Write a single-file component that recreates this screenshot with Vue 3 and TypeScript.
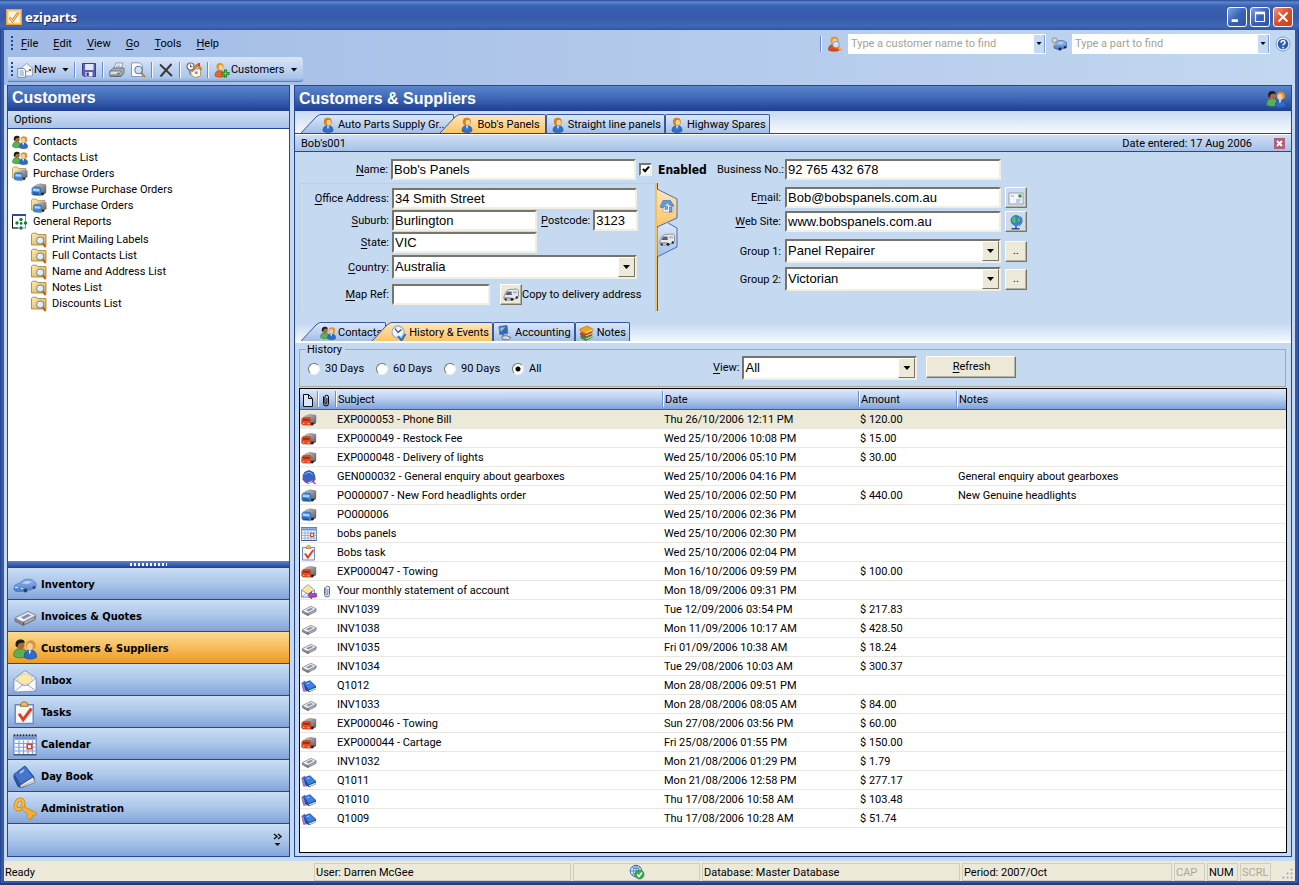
<script setup lang="ts">
import { ref } from 'vue'

interface TreeItem { icon: string; label: string; child?: boolean; tall?: boolean }
interface NavItem { icon: string; label: string }
interface HistoryRow { icon: string; clip?: boolean; subject: string; date: string; amount?: string; notes?: string }

const menus: string[] = ['File', 'Edit', 'View', 'Go', 'Tools', 'Help']

const tree: TreeItem[] = [
  { icon: 'people', label: 'Contacts' },
  { icon: 'people', label: 'Contacts List' },
  { icon: 'folder-truck', label: 'Purchase Orders' },
  { icon: 'truck-blue', label: 'Browse Purchase Orders', child: true },
  { icon: 'folder-truck', label: 'Purchase Orders', child: true },
  { icon: 'report', label: 'General Reports', tall: true },
  { icon: 'folder-find', label: 'Print Mailing Labels', child: true },
  { icon: 'folder-find', label: 'Full Contacts List', child: true },
  { icon: 'folder-find', label: 'Name and Address List', child: true },
  { icon: 'folder-find', label: 'Notes List', child: true },
  { icon: 'folder-find', label: 'Discounts List', child: true },
]

const nav: NavItem[] = [
  { icon: 'car', label: 'Inventory' },
  { icon: 'invoice', label: 'Invoices & Quotes' },
  { icon: 'people', label: 'Customers & Suppliers' },
  { icon: 'mail-open', label: 'Inbox' },
  { icon: 'task', label: 'Tasks' },
  { icon: 'calendar', label: 'Calendar' },
  { icon: 'book', label: 'Day Book' },
  { icon: 'key', label: 'Administration' },
]
const activeNav = ref('Customers & Suppliers')

const rows: HistoryRow[] = [
  { icon: 'truck-red', subject: 'EXP000053 - Phone Bill', date: 'Thu 26/10/2006 12:11 PM', amount: '$ 120.00' },
  { icon: 'truck-red', subject: 'EXP000049 - Restock Fee', date: 'Wed 25/10/2006 10:08 PM', amount: '$ 15.00' },
  { icon: 'truck-red', subject: 'EXP000048 - Delivery of lights', date: 'Wed 25/10/2006 05:10 PM', amount: '$ 30.00' },
  { icon: 'book-arrow', subject: 'GEN000032 - General enquiry about gearboxes', date: 'Wed 25/10/2006 04:16 PM', notes: 'General enquiry about gearboxes' },
  { icon: 'truck-blue', subject: 'PO000007 - New Ford headlights order', date: 'Wed 25/10/2006 02:50 PM', amount: '$ 440.00', notes: 'New Genuine headlights' },
  { icon: 'truck-blue', subject: 'PO000006', date: 'Wed 25/10/2006 02:36 PM' },
  { icon: 'calendar', subject: 'bobs panels', date: 'Wed 25/10/2006 02:30 PM' },
  { icon: 'task', subject: 'Bobs task', date: 'Wed 25/10/2006 02:04 PM' },
  { icon: 'truck-red', subject: 'EXP000047 - Towing', date: 'Mon 16/10/2006 09:59 PM', amount: '$ 100.00' },
  { icon: 'mail-reply', clip: true, subject: 'Your monthly statement of account', date: 'Mon 18/09/2006 09:31 PM' },
  { icon: 'invoice', subject: 'INV1039', date: 'Tue 12/09/2006 03:54 PM', amount: '$ 217.83' },
  { icon: 'invoice', subject: 'INV1038', date: 'Mon 11/09/2006 10:17 AM', amount: '$ 428.50' },
  { icon: 'invoice', subject: 'INV1035', date: 'Fri 01/09/2006 10:38 AM', amount: '$ 18.24' },
  { icon: 'invoice', subject: 'INV1034', date: 'Tue 29/08/2006 10:03 AM', amount: '$ 300.37' },
  { icon: 'books-blue', subject: 'Q1012', date: 'Mon 28/08/2006 09:51 PM' },
  { icon: 'invoice', subject: 'INV1033', date: 'Mon 28/08/2006 08:05 AM', amount: '$ 84.00' },
  { icon: 'truck-red', subject: 'EXP000046 - Towing', date: 'Sun 27/08/2006 03:56 PM', amount: '$ 60.00' },
  { icon: 'truck-red', subject: 'EXP000044 - Cartage', date: 'Fri 25/08/2006 01:55 PM', amount: '$ 150.00' },
  { icon: 'invoice', subject: 'INV1032', date: 'Mon 21/08/2006 01:29 PM', amount: '$ 1.79' },
  { icon: 'books-blue', subject: 'Q1011', date: 'Mon 21/08/2006 12:58 PM', amount: '$ 277.17' },
  { icon: 'books-blue', subject: 'Q1010', date: 'Thu 17/08/2006 10:58 AM', amount: '$ 103.48' },
  { icon: 'books-blue', subject: 'Q1009', date: 'Thu 17/08/2006 10:28 AM', amount: '$ 51.74' },
]
const selectedRow = ref(0)

const periods: string[] = ['30 Days', '60 Days', '90 Days', 'All']
const period = ref('All')

const findCustomer = ref('')
const findPart = ref('')
const customer = ref({
  name: "Bob's Panels",
  street: '34 Smith Street',
  suburb: 'Burlington',
  postcode: '3123',
  state: 'VIC',
  mapRef: '',
  businessNo: '92 765 432 678',
  email: 'Bob@bobspanels.com.au',
  web: 'www.bobspanels.com.au',
  enabled: true,
})
</script>

<template>
  <svg class="defs" aria-hidden="true">
    <defs>
      <linearGradient id="g-folder" x1="0" y1="0" x2="1" y2="1"><stop offset="0" stop-color="#fdeeb4" /><stop offset="1" stop-color="#dba545" /></linearGradient>
      <linearGradient id="g-blue" x1="0" y1="0" x2="0" y2="1"><stop offset="0" stop-color="#9cc0f0" /><stop offset="1" stop-color="#4478cc" /></linearGradient>
      <linearGradient id="g-grey" x1="0" y1="0" x2="1" y2="1"><stop offset="0" stop-color="#c8c8cc" /><stop offset="1" stop-color="#5a5a60" /></linearGradient>
      <linearGradient id="g-tab" x1="0" y1="0" x2="0" y2="1"><stop offset="0" stop-color="#dce8f8" /><stop offset="1" stop-color="#a3bfe6" /></linearGradient>
      <linearGradient id="g-tab-on" x1="0" y1="0" x2="0" y2="1"><stop offset="0" stop-color="#fde6c0" /><stop offset="1" stop-color="#fac566" /></linearGradient>
    </defs>
    <symbol id="i-logo" viewBox="0 0 16 16">
      <rect x=".5" y=".5" width="15" height="15" fill="#f6b050" stroke="#f2a030" />
      <rect x="2" y="2" width="12" height="12" fill="#fdf3da" stroke="#fbdc9c" />
      <path d="M3.500 8.500l3 3.500 6-8.500" fill="none" stroke="#a87830" stroke-width="2.600" /><path d="M3.500 8.500l3 3.500 6-8.500" fill="none" stroke="#fbd890" stroke-width="1.200" />
    </symbol>
    <symbol id="i-person" viewBox="0 0 16 16">
      <path d="M3 14c0-4 2-5.500 5-5.500s5 1.500 5 5.500c-2 2-8 2-10 0z" fill="#2f72cc" stroke="#1d4a94" stroke-width=".6" />
      <path d="M7 9l1 3.500 1.100-3.500z" fill="#e8f0fb" />
      <circle cx="7.800" cy="4.800" r="4" fill="#d08416" /><ellipse cx="8.800" cy="5.600" rx="2.200" ry="2.800" fill="#f8cf9c" />
    </symbol>
    <symbol id="i-people" viewBox="0 0 16 16">
      <path d="M.5 12.500C.5 9 2 7.800 5 7.800s4.500 1.500 4.500 5c-2 1.500-7.500 1.500-9-.3z" fill="#5cb054" stroke="#2e7a3c" stroke-width=".5" />
      <ellipse cx="5" cy="5.200" rx="2.700" ry="3" fill="#a96a35" /><path d="M1.800 6C1.300 3 3 1.600 5 1.700c1.800-.2 3 .8 2.800 2.300C6 3.600 4 4 3.400 5L3 7z" fill="#1d1d1d" />
      <path d="M7.500 13.500c0-3.500 1.300-4.800 4-4.800s4.200 1.500 4.200 4.800c-2 1.600-6.500 1.600-8.200 0z" fill="#2e6cc6" stroke="#1d4a94" stroke-width=".5" />
      <path d="M10.400 9l.7 2.600 1-2.600z" fill="#fff" />
      <circle cx="11.900" cy="5.500" r="3.300" fill="#d8963a" /><ellipse cx="11.200" cy="6.400" rx="2" ry="2.400" fill="#f8cc9a" />
    </symbol>
    <symbol id="i-truck-blue" viewBox="0 0 16 16">
      <path d="M4 3.500l5-1.700 6 1v7L10 12.500 4 11z" fill="url(#g-grey)" stroke="#666" stroke-width=".4" />
      <path d="M1 6.500l1.500-1.800 6.500.6.800 1.200v7l-7.800-.4L.8 12z" fill="#3f86d8" stroke="#1c5aaa" stroke-width=".5" />
      <path d="M2 6.500l6.500.4v2.600L1.800 9z" fill="#a5d4f8" /><path d="M2 10.800l5.500.4M2.200 12.400l6 .3" stroke="#123c84" stroke-width=".8" />
      <path d="M10 12l5-2v1l-5 2.500z" fill="#333" /><circle cx="11.500" cy="12" r="1.400" fill="#222" />
    </symbol>
    <symbol id="i-truck-red" viewBox="0 0 16 16">
      <path d="M4 4l5-1.700 6 1v6.500L10 12.500 4 11z" fill="url(#g-grey)" stroke="#777" stroke-width=".4" />
      <path d="M.8 7l1.500-1.800 6.700.4.800 1.200v6.400l-7.800-.2L.6 12z" fill="#e84a22" stroke="#b43214" stroke-width=".5" />
      <path d="M2 6.800l6.500.3v2l-6.700-.3z" fill="#8c3428" /><path d="M1.800 11.400l1.500.1M6.500 11.700l1.800.1" stroke="#ffd9a0" stroke-width="1" />
      <path d="M10 12l5-2v1l-5 2.500z" fill="#333" /><circle cx="11.300" cy="12" r="1.400" fill="#222" />
    </symbol>
    <symbol id="i-folder-truck" viewBox="0 0 16 16">
      <path d="M.5 12V2.500L1.500 1h4l1 1.500H14V12z" fill="url(#g-folder)" stroke="#a98a48" stroke-width=".7" />
      <path d="M6 5l5-1.500 4.500 1V11l-4 2L6 12z" fill="url(#g-grey)" />
      <path d="M2.500 8l1-1.500 6 .5.800 1v6.500l-7-.5-1-1z" fill="#3f86d8" stroke="#1c5aaa" stroke-width=".5" />
      <path d="M3.500 8l6 .4v2.300l-6-.3z" fill="#a5d4f8" /><circle cx="12" cy="12.800" r="1.300" fill="#222" />
    </symbol>
    <symbol id="i-report" viewBox="0 0 16 16">
      <rect x=".5" y="1" width="13" height="13" fill="#fff" stroke="#8b93a8" /><path d="M0 1h14" stroke="#2a4aa8" stroke-width="2" /><path d="M.5 2v12H6" stroke="#111" fill="none" />
      <g fill="#12803c"><circle cx="9" cy="5.500" r="1.700" /><circle cx="5" cy="9" r="1.700" /><circle cx="9.200" cy="9.400" r="1.400" /><circle cx="13.500" cy="9" r="1.700" /><circle cx="9" cy="14" r="1.700" /></g>
    </symbol>
    <symbol id="i-folder-find" viewBox="0 0 16 16">
      <path d="M.5 13V2.500L1.500 1.200h4l1 1.300H15V13z" fill="url(#g-folder)" stroke="#9c7c3c" stroke-width=".8" />
      <path d="M11.500 11l3.300 4" stroke="#b86a14" stroke-width="2.200" /><circle cx="9.200" cy="8.500" r="3.600" fill="#dcecfc" stroke="#6b84ac" /><path d="M7.200 8.500a2 2 0 012-2" stroke="#fff" fill="none" stroke-width="1.200" />
    </symbol>
    <symbol id="i-car" viewBox="0 0 24 24">
      <path d="M1 15c0-3 2-4 5-4.500L10.500 7c4-1.500 7-1 9 0l3.500 3v4l-4 2.500-9 2H3l-2-1.500z" fill="url(#g-blue)" stroke="#4a74be" stroke-width=".7" />
      <path d="M7.500 11l4-3c2-.8 4-.8 6 0l2 2-5 1.400z" fill="#b8d2f4" stroke="#5a84c8" stroke-width=".6" />
      <circle cx="12.500" cy="17.500" r="1.900" fill="#36405a" /><circle cx="21" cy="14.500" r="1.500" fill="#36405a" /><path d="M2 14.500h3M8 15.500h2" stroke="#f2f7ff" stroke-width="1.200" />
    </symbol>
    <symbol id="i-invoice" viewBox="0 0 24 24">
      <path d="M2 13L15 6.500l8 4-1 4L10 20.500 2 16z" fill="#84868e" stroke="#64666e" stroke-width=".8" />
      <path d="M2 13L15 6.500l8 4L10.500 17z" fill="#e3e5ea" stroke="#8b8d95" stroke-width=".7" />
      <path d="M8 12.500l7-3.500 3 1.500-7 3.500z" fill="#7d8caa" /><path d="M5 13l5 2.500" stroke="#fff" stroke-width="1.500" /><path d="M10.500 17v3" stroke="#50525a" />
      <path d="M12 18l9-4.500" stroke="#d8d9de" stroke-width=".9" />
    </symbol>
    <symbol id="i-mail-open" viewBox="0 0 24 24">
      <path d="M1 10L12 1.500 23 9v13l-22 1z" fill="#e7edfa" stroke="#8494c0" />
      <path d="M4.500 8l7-3.500L19 7.500V15H4.500z" fill="#fce9a8" stroke="#d8c078" stroke-width=".6" />
      <path d="M1 10l9 6.500h4L23 9v13l-22 1z" fill="#f8faff" stroke="#8494c0" stroke-width=".8" /><path d="M1 23l9-7.500M23 22l-9-6.500" stroke="#8494c0" stroke-width=".8" />
    </symbol>
    <symbol id="i-mail-reply" viewBox="0 0 16 16">
      <path d="M.5 7L7 1.500 13.500 7v7H.5z" fill="#fbe59a" stroke="#8494c0" stroke-width=".8" />
      <path d="M.5 7L6 10.500h2L13.500 7v7H.5z" fill="#f4f8ff" stroke="#7488bc" stroke-width=".8" /><path d="M.5 14L6 10" stroke="#7488bc" stroke-width=".7" />
      <path d="M6.500 12l4-3.500v2h5v3.600h-5V16z" fill="#a648b8" stroke="#6a2480" stroke-width=".6" />
    </symbol>
    <symbol id="i-task" viewBox="0 0 16 16">
      <path d="M1.500 2.500h12v12.500h-12z" fill="#f4f7fd" stroke="#6c8ac4" /><path d="M5 3.500c0-1.600 1-3 2.500-3s2.500 1.400 2.500 3z" fill="#e6bf6c" stroke="#9c7428" stroke-width=".7" />
      <path d="M4 8.500L6.800 12.500 12.300 5" fill="none" stroke="#e2401c" stroke-width="2" />
    </symbol>
    <symbol id="i-calendar" viewBox="0 0 16 16">
      <rect x=".5" y="2" width="15" height="12.500" fill="#f6f9ff" stroke="#7a94c8" /><rect x="1" y="2.500" width="14" height="2" fill="#6d95dc" />
      <path d="M.5 1.500h15" stroke="#333" stroke-width="1.200" stroke-dasharray="1 1" />
      <path d="M1 7h14M1 9.500h14M1 12h14M4 5v9M7 5v9M10 5v9M13 5v9" stroke="#7fa3e4" stroke-width=".8" />
      <rect x="9.500" y="7.500" width="3" height="3" fill="#fff" stroke="#e0401c" /><path d="M.5 14.500h15" stroke="#4a5c84" />
    </symbol>
    <symbol id="i-book" viewBox="0 0 24 24">
      <path d="M1 9.500L12 1l9 11v5L9 22.500l-4-1L1 13z" fill="#2c55a4" stroke="#1a3a7c" stroke-width=".8" />
      <path d="M7 20.500L20 12l2 5.500-13.500 5z" fill="#e9ebf0" stroke="#6c7488" stroke-width=".7" /><path d="M1 9.500L12 1l8 11L7.500 19z" fill="#4477cc" stroke="#27509c" stroke-width=".7" />
      <path d="M7 8l4-3" stroke="#a5c8f6" stroke-width="1.600" /><path d="M9 21l12-5" stroke="#9aa0b0" stroke-width=".7" />
    </symbol>
    <symbol id="i-books-blue" viewBox="0 0 16 16">
      <path d="M.8 5l3-2L6 13l-3.500.3z" fill="#a486cc" stroke="#68489c" stroke-width=".6" />
      <path d="M2.500 5l6.500-2.300L15 8.500v2.500L8 14.300 4.200 11.500z" fill="#1c4ca4" /><path d="M2.500 5L9 2.700 15 8.500l-7.300 3.300z" fill="#3d80de" stroke="#1c4ca4" stroke-width=".6" />
      <path d="M8 13l6.700-2.800" stroke="#eef3fb" stroke-width="1.200" /><path d="M6 5.800l2.500-1" stroke="#a8cff8" />
    </symbol>
    <symbol id="i-book-arrow" viewBox="0 0 16 16">
      <path d="M2 6.500l2-3.500 4-1.500 4.500 2L14 8l-1 4-6 2.500L2.500 11z" fill="#3468c4" stroke="#1c3f8c" stroke-width=".7" /><path d="M4 6l2-2.500h3l2.500 2" stroke="#8cbcf4" fill="none" />
      <path d="M7 14l6-2.500" stroke="#e0e4f0" stroke-width="1.200" /><path d="M14.500 9.500l-3 3 3 2.500" fill="none" stroke="#9c3cac" stroke-width="1.500" /><path d="M1.500 9.500l4 4.500" stroke="#9c3cac" stroke-width="1.200" />
    </symbol>
    <symbol id="i-key" viewBox="0 0 24 24">
      <ellipse cx="6.500" cy="7.500" rx="3.600" ry="5.200" transform="rotate(25 6.500 7.500)" fill="none" stroke="#c88418" stroke-width="4" />
      <ellipse cx="6.500" cy="7.500" rx="3.600" ry="5.200" transform="rotate(25 6.500 7.500)" fill="none" stroke="#f8bc44" stroke-width="2.400" />
      <path d="M8 11l3-1.500L23.500 16l-.5 2-2 1-1.500-.5.300 2-2.300.3.500 2.200-4-2 1-3z" fill="#f4ae34" stroke="#c8841e" stroke-width=".8" />
    </symbol>
    <symbol id="i-van" viewBox="0 0 16 16">
      <path d="M1 9l2.500-5L6 2.500l8-.5 1.500 1.500v6L13 11.500 8 13H2l-1-1z" fill="#e8e9ee" stroke="#70727a" stroke-width=".7" />
      <path d="M2.500 8L4 4.800l4.500-.3L8.800 8z" fill="#5a5e72" /><path d="M10 4.300h4v2h-4z" fill="#b4b6c4" /><path d="M1 11h7" stroke="#666" />
      <circle cx="9" cy="12.300" r="1.500" fill="#222" /><circle cx="2.800" cy="12.600" r="1.100" fill="#222" /><circle cx="13.800" cy="10.500" r="1.200" fill="#222" />
    </symbol>
    <symbol id="i-house" viewBox="0 0 16 16">
      <path d="M4 7h10v7H4z" fill="#f4f6fc" stroke="#8a96b8" stroke-width=".6" /><path d="M1 9l3-6.500h7.500L15 8H12L8 4.500 4 10z" fill="#5a9ce0" stroke="#3a70b8" stroke-width=".6" />
      <rect x="6" y="8.500" width="2.500" height="3" fill="#8cb4e4" stroke="#3a68a8" stroke-width=".6" /><rect x="10.500" y="9" width="2.300" height="5" fill="#78a4dc" stroke="#3a68a8" stroke-width=".6" />
    </symbol>
    <symbol id="i-card" viewBox="0 0 16 16">
      <rect x="1" y="3" width="14" height="11" fill="#f4f6fb" stroke="#8890a8" stroke-width=".8" /><rect x="10.500" y="4.500" width="3" height="3" fill="#18963c" /><path d="M3 6h3M8 10h5M8 12h4" stroke="#99a" />
    </symbol>
    <symbol id="i-globe" viewBox="0 0 16 16">
      <circle cx="8" cy="6.500" r="5" fill="#2f86dc" stroke="#1c4c94" stroke-width=".6" /><path d="M5 3c2-1.500 3 0 2.500 1.500S9 7 7 8.500 4 7 4 5zM10 3.500c1.500 0 2.500 2 2 3.500S10 8 9.800 6z" fill="#58c048" />
      <path d="M12.500 2.500a6 6 0 01-2 9.500" fill="none" stroke="#2c5c9c" /><path d="M8 12v2M3.500 14.700h8" stroke="#285090" stroke-width="1.500" />
    </symbol>
    <symbol id="i-clock" viewBox="0 0 16 16">
      <circle cx="7" cy="7" r="6" fill="#eef5fd" stroke="#9cb4d4" stroke-width="1.300" /><path d="M4 3.500l3 4 3.500-3" fill="none" stroke="#2a3f70" stroke-width="1.200" />
      <path d="M7 11l3.500 4.500L14.500 9" fill="none" stroke="#2a6cc8" stroke-width="2" />
    </symbol>
    <symbol id="i-computer" viewBox="0 0 16 16">
      <path d="M2 1.500l8-1 .8 8-8 1z" fill="#2c66b8" stroke="#6b7890" /><path d="M3 2.800l5.500-.7-4.500 5z" fill="#8cc0f4" />
      <path d="M5 11.500l4-1 5 2-3 2.500-6-1z" fill="#d4d8e0" stroke="#5c6478" stroke-width=".8" /><path d="M6 9v2" stroke="#555" />
    </symbol>
    <symbol id="i-books" viewBox="0 0 16 16">
      <path d="M2 11l8-2 4 2.500-7 4L2 13z" fill="#3c9c3c" stroke="#1c5c1c" stroke-width=".6" /><path d="M1.500 8l8-2 4.500 2.500-7 3.500-5.500-2z" fill="#d44a20" stroke="#7c2808" stroke-width=".6" />
      <path d="M1 4l7-3 6 3v2L7 9 1 6z" fill="#f4a41c" stroke="#a86808" stroke-width=".6" /><path d="M7 7.500l7-3M7 11l7-3M7 14l7-3" stroke="#dff0d8" stroke-width=".8" />
    </symbol>
    <symbol id="i-new" viewBox="0 0 16 16">
      <path d="M4 6l5.500-4.500L15.500 6v8H4z" fill="#f2f6fe" stroke="#7f93bc" stroke-width=".8" /><path d="M4 6l6 4 5.500-4" fill="none" stroke="#7f93bc" stroke-width=".8" /><rect x="12" y="7" width="2" height="2" fill="#e03c1c" />
      <path d="M.8 6.500h6l1.700 2v6.800H.8z" fill="#fff" stroke="#56719f" stroke-width=".8" /><path d="M2.500 9h4M2.500 11h4.500M2.500 13h4.500" stroke="#5c84d0" stroke-width=".9" />
    </symbol>
    <symbol id="i-save" viewBox="0 0 16 16">
      <path d="M1.500 1.500h13v13H3L1.500 13z" fill="#5a60b8" stroke="#3a408c" /><rect x="4" y="2" width="8.500" height="6" fill="#dfe6f8" /><rect x="4.500" y="10" width="7" height="4.500" fill="#eef0f8" /><rect x="5.500" y="10.500" width="2.300" height="3.500" fill="#3a408c" />
    </symbol>
    <symbol id="i-print" viewBox="0 0 16 16">
      <path d="M5 6l2-5h7l-2 5z" fill="#fff" stroke="#6c7890" stroke-width=".7" /><path d="M7.500 3h4M7 4.500h4" stroke="#7c98cc" stroke-width=".7" />
      <path d="M1 9l3.500-3h10.500v5l-3 3.500H1z" fill="#a9acb4" stroke="#545a66" stroke-width=".7" /><path d="M1 9h11v5H1z" fill="#dcdee4" stroke="#545a66" stroke-width=".7" /><path d="M8 11.500h3" stroke="#2aa43c" stroke-width="1.600" /><path d="M2 13h9" stroke="#666c78" />
    </symbol>
    <symbol id="i-preview" viewBox="0 0 16 16">
      <path d="M1.500.8h8L12.500 4v10.500h-11z" fill="#fdfdff" stroke="#8090b0" stroke-width=".9" /><path d="M11 11l4 4" stroke="#c48418" stroke-width="2.200" /><circle cx="8.500" cy="8" r="3.800" fill="#c9e2fa" stroke="#64748c" />
    </symbol>
    <symbol id="i-delete" viewBox="0 0 16 16"><path d="M2 2.500l12 11.500M13.500 2L2.500 14.500" fill="none" stroke="#383838" stroke-width="1.900" /></symbol>
    <symbol id="i-home-clock" viewBox="0 0 16 16">
      <path d="M5 7h9.500v7L9 15.500 5 13z" fill="#fdf7e4" stroke="#a08048" stroke-width=".7" /><path d="M4 8.500L9 3.500l3-1.500L16 7l-1.500.5L11 4 7 9.500z" fill="#f08c24" stroke="#a84c0c" stroke-width=".6" /><path d="M13 1v3" stroke="#d03010" stroke-width="1.700" />
      <rect x="9" y="9.500" width="2.500" height="2.500" fill="#6c94d0" /><circle cx="4.500" cy="4.500" r="3.500" fill="#f8fafc" stroke="#6c7484" stroke-width="1.200" /><path d="M4.500 2.500v2.200h2" stroke="#333" fill="none" stroke-width=".9" /><path d="M3 8.500l1.500 4.500" stroke="#6c7484" />
    </symbol>
    <symbol id="i-person-add" viewBox="0 0 16 16">
      <path d="M1 14c0-4 2-5.500 4.500-5.500S11 10 11 14c-2 1.600-8 1.600-10 0z" fill="#e4682c" stroke="#9c3c10" stroke-width=".6" /><circle cx="6" cy="4.500" r="3.600" fill="#e09420" /><ellipse cx="6.800" cy="5.400" rx="2.100" ry="2.700" fill="#fad49c" />
      <path d="M11.500 7.500v8M7.500 11.500h8" stroke="#1c7c24" stroke-width="3.200" /><path d="M11.500 8.500v6M8.500 11.500h6" stroke="#5ccc4c" stroke-width="1.400" />
    </symbol>
    <symbol id="i-person-find" viewBox="0 0 16 16">
      <path d="M1.500 14c0-4 2-5.500 5-5.500s6 1.500 6 5.500c-2 1.600-9 1.600-11 0z" fill="#e04c1c" stroke="#9c2c0c" stroke-width=".6" /><circle cx="7.500" cy="4.500" r="4" fill="#e89824" /><ellipse cx="7.800" cy="5.500" rx="2.300" ry="2.700" fill="#fad49c" />
      <path d="M11 11.500l3.800 3" stroke="#f0a844" stroke-width="2.200" /><circle cx="9" cy="8.500" r="3.300" fill="#cfe6fb" stroke="#7a9cc4" />
    </symbol>
    <symbol id="i-car-gear" viewBox="0 0 16 16">
      <path d="M3 9l4-4c3-1 6-.7 9 2v4L8.500 14 3 12z" fill="url(#g-blue)" stroke="#2c5ca4" stroke-width=".7" /><path d="M6 8.500l2-2.400c2-.4 4-.3 5 .6l-1.500 1.800z" fill="#a8c8f0" /><circle cx="9" cy="13" r="1.400" fill="#223" /><circle cx="14" cy="11.300" r="1.200" fill="#223" />
      <circle cx="3.500" cy="4.300" r="2.200" fill="#eef2f8" stroke="#a4a8b0" stroke-width="1.800" /><path d="M4.500 7L3 10" stroke="#a4a8b0" stroke-width="1.600" />
    </symbol>
    <symbol id="i-help" viewBox="0 0 16 16">
      <circle cx="8" cy="8" r="7" fill="#eef4fd" stroke="#7c9cd4" /><circle cx="8" cy="8" r="5.300" fill="#2c5ab8" /><path d="M6 6.700c0-3 4.200-2.600 4 0C9.900 8 8 8 8 9.600" fill="none" stroke="#fff" stroke-width="1.500" /><circle cx="8" cy="11.600" r=".9" fill="#fff" />
    </symbol>
    <symbol id="i-clip" viewBox="0 0 16 16"><path d="M5.500 4.500v7a2.500 2.500 0 005 0V5a1.800 1.800 0 00-3.600 0v6a1 1 0 002 0V6" fill="none" stroke="currentColor" /></symbol>
    <symbol id="i-doc" viewBox="0 0 16 16"><path d="M3.500 2.500h5l4 4v8h-9zM8.500 2.500v4h4" fill="#dbe7f8" stroke="#111" /></symbol>
    <symbol id="i-globe-ok" viewBox="0 0 16 16">
      <circle cx="7" cy="7" r="5.800" fill="#dcecfc" stroke="#3c78c0" /><path d="M1 7h12M7 1v12M3 3.500c2 1.300 6 1.300 8 0M3 10.500c2-1.300 6-1.300 8 0M7 1C3.500 4 3.500 10 7 13M7 1c3.500 3 3.500 9 0 12" fill="none" stroke="#3c78c0" stroke-width=".8" />
      <circle cx="10.500" cy="10.500" r="4.500" fill="#3cac4c" stroke="#267c34" stroke-width=".7" /><path d="M8.300 10.500l1.700 2 3-4" fill="none" stroke="#fff" stroke-width="1.500" />
    </symbol>
  </svg>

  <div class="window">
    <header class="titlebar">
      <svg class="ic"><use href="#i-logo" /></svg>
      <h1>eziparts</h1>
      <button class="win" aria-label="Minimize"><svg viewBox="0 0 20 20"><path d="M4 14h7" stroke="#fff" stroke-width="3" /></svg></button>
      <button class="win" aria-label="Maximize"><svg viewBox="0 0 20 20"><path d="M5 6v9h10V6z" fill="none" stroke="#fff" stroke-width="1.300" /><path d="M4.400 5.500h11.200" stroke="#fff" stroke-width="3" /></svg></button>
      <button class="win close" aria-label="Close"><svg viewBox="0 0 20 20"><path d="M5 5l10 10M15 5L5 15" stroke="#fff" stroke-width="2.200" /></svg></button>
    </header>

    <div class="client">
      <nav class="menubar">
        <i class="grip"></i>
        <button v-for="m in menus" :key="m" class="menu"><u>{{ m[0] }}</u>{{ m.slice(1) }}</button>
        <div class="finders">
          <i class="sep"></i>
          <svg class="ic"><use href="#i-person-find" /></svg>
          <div class="finder">
            <input v-model="findCustomer" aria-label="Find customer" placeholder="Type a customer name to find" />
            <button aria-label="Recent customers"><i class="caret"></i></button>
          </div>
          <svg class="ic"><use href="#i-car-gear" /></svg>
          <div class="finder">
            <input v-model="findPart" aria-label="Find part" placeholder="Type a part to find" />
            <button aria-label="Recent parts"><i class="caret"></i></button>
          </div>
          <button class="tool" aria-label="Help"><svg class="ic"><use href="#i-help" /></svg></button>
        </div>
      </nav>

      <div class="toolbar">
        <i class="grip"></i>
        <button class="tool"><svg class="ic"><use href="#i-new" /></svg>New<i class="caret"></i></button>
        <i class="sep"></i>
        <button class="tool" aria-label="Save"><svg class="ic"><use href="#i-save" /></svg></button>
        <i class="sep"></i>
        <button class="tool" aria-label="Print"><svg class="ic"><use href="#i-print" /></svg></button>
        <button class="tool" aria-label="Print preview"><svg class="ic"><use href="#i-preview" /></svg></button>
        <i class="sep"></i>
        <button class="tool" aria-label="Delete"><svg class="ic"><use href="#i-delete" /></svg></button>
        <i class="sep"></i>
        <button class="tool" aria-label="Reminders"><svg class="ic"><use href="#i-home-clock" /></svg></button>
        <i class="sep"></i>
        <button class="tool"><svg class="ic"><use href="#i-person-add" /></svg>Customers<i class="caret"></i></button>
      </div>

      <div class="body">
        <aside class="side panel">
          <h2>Customers</h2>
          <h3>Options</h3>
          <ul class="tree">
            <li v-for="(t, i) in tree" :key="i" :class="{ child: t.child, tall: t.tall }">
              <svg class="ic"><use :href="'#i-' + t.icon" /></svg><a href="#">{{ t.label }}</a>
            </li>
          </ul>
          <div class="splitter"><i></i></div>
          <button v-for="n in nav" :key="n.label" class="nav" :class="{ on: n.label === activeNav }" @click="activeNav = n.label">
            <svg><use :href="'#i-' + n.icon" /></svg>{{ n.label }}
          </button>
          <div class="navfoot">
            <button aria-label="Configure buttons"><svg viewBox="0 0 10 14"><path d="M1 1l3 2.500L1 6M5 1l3 2.500L5 6" fill="none" stroke="#111" stroke-width="1.400" /><path d="M1.500 10h6L4.500 13z" fill="#111" /></svg></button>
          </div>
        </aside>

        <main class="main panel">
          <h2>Customers &amp; Suppliers<svg class="corner"><use href="#i-people" /></svg></h2>
          <div class="tabs upper">
            <button class="tab slanted first">
              <svg class="slant" viewBox="0 0 20 19"><path class="fill" d="M0 19L15 3Q18 0 20 0V19z" /><path class="line" d="M0 19L15 3Q18 .5 20 .5" /></svg>
              <span class="face"><svg class="ic"><use href="#i-person" /></svg>Auto Parts Supply Gr..</span>
            </button>
            <button class="tab slanted on">
              <svg class="slant" viewBox="0 0 20 19"><path class="fill" d="M0 19L15 3Q18 0 20 0V19z" /><path class="line" d="M0 19L15 3Q18 .5 20 .5" /></svg>
              <span class="face"><svg class="ic"><use href="#i-person" /></svg>Bob's Panels</span>
            </button>
            <button class="tab"><span class="face"><svg class="ic"><use href="#i-person" /></svg>Straight line panels</span></button>
            <button class="tab"><span class="face"><svg class="ic"><use href="#i-person" /></svg>Highway Spares</span></button>
          </div>
          <div class="record">
            <span>Bob's001</span>
            <span class="entered">Date entered: 17 Aug 2006</span>
            <button aria-label="Close record"><svg viewBox="0 0 11 11"><path d="M3 3l5 5M8 3L3 8" stroke="#fff" stroke-width="1.800" /></svg></button>
          </div>

          <form class="form" @submit.prevent>
            <div class="left">
              <div class="line">
                <label for="name"><u>N</u>ame:</label>
                <input id="name" v-model="customer.name" class="field" />
                <input id="enabled" v-model="customer.enabled" type="checkbox" />
                <label for="enabled" class="strong">Enabled</label>
              </div>
              <div class="address">
                <div class="box">
                  <div class="line"><label for="street"><u>O</u>ffice Address:</label><input id="street" v-model="customer.street" class="field" /></div>
                  <div class="line">
                    <label for="suburb"><u>S</u>uburb:</label><input id="suburb" v-model="customer.suburb" class="field mid" />
                    <label for="postcode" class="post"><u>P</u>ostcode:</label><input id="postcode" v-model="customer.postcode" class="field" />
                  </div>
                  <div class="line"><label for="state"><u>S</u>tate:</label><input id="state" v-model="customer.state" class="field mid" /></div>
                  <div class="line"><label for="country"><u>C</u>ountry:</label><span class="combo"><select id="country"><option>Australia</option></select><i class="drop"><i class="caret"></i></i></span></div>
                  <div class="line mapline">
                    <label for="mapref"><u>M</u>ap Ref:</label><input id="mapref" v-model="customer.mapRef" class="field map" />
                    <button id="copy" class="square" aria-labelledby="copytext"><svg class="ic"><use href="#i-van" /></svg></button><label id="copytext" for="copy" class="copy">Copy to delivery address</label>
                  </div>
                </div>
                <div class="sidetabs">
                  <button aria-label="Office address"><svg viewBox="0 0 22 38"><path d="M0 0L20 10V29L0 38z" fill="url(#g-tab-on)" /><path d="M0 0L20 10V29L0 38" fill="none" stroke="#4a6cb0" /></svg><svg class="ic"><use href="#i-house" /></svg></button>
                  <button aria-label="Delivery address"><svg viewBox="0 0 22 38"><path d="M0 5L11 0 20 5V24L0 34z" fill="url(#g-tab)" /><path d="M11 0L20 5V24L0 34V5" fill="none" stroke="#4a6cb0" /></svg><svg class="ic"><use href="#i-van" /></svg></button>
                </div>
              </div>
            </div>
            <div class="right">
              <label for="bno">Business No.:</label><input id="bno" v-model="customer.businessNo" class="field" /><i></i>
              <label for="email">E<u>m</u>ail:</label><input id="email" v-model="customer.email" class="field" /><button class="square cool" aria-label="Send email"><svg class="ic"><use href="#i-card" /></svg></button>
              <label for="web"><u>W</u>eb Site:</label><input id="web" v-model="customer.web" class="field" /><button class="square cool" aria-label="Open web site"><svg class="ic"><use href="#i-globe" /></svg></button>
              <label for="g1">Group 1:</label><span class="combo"><select id="g1"><option>Panel Repairer</option></select><i class="drop"><i class="caret"></i></i></span><button class="square">..</button>
              <label for="g2">Group 2:</label><span class="combo"><select id="g2"><option>Victorian</option></select><i class="drop"><i class="caret"></i></i></span><button class="square">..</button>
            </div>
          </form>

          <div class="tabs lower">
            <button class="tab slanted first">
              <svg class="slant" viewBox="0 0 20 19"><path class="fill" d="M0 19L15 3Q18 0 20 0V19z" /><path class="line" d="M0 19L15 3Q18 .5 20 .5" /></svg>
              <span class="face"><svg class="ic"><use href="#i-people" /></svg>Contacts</span>
            </button>
            <button class="tab slanted on">
              <svg class="slant" viewBox="0 0 20 19"><path class="fill" d="M0 19L15 3Q18 0 20 0V19z" /><path class="line" d="M0 19L15 3Q18 .5 20 .5" /></svg>
              <span class="face"><svg class="ic"><use href="#i-clock" /></svg>History &amp; Events</span>
            </button>
            <button class="tab"><span class="face"><svg class="ic"><use href="#i-computer" /></svg>Accounting</span></button>
            <button class="tab"><span class="face"><svg class="ic"><use href="#i-books" /></svg>Notes</span></button>
          </div>

          <fieldset class="history">
            <legend>History</legend>
            <div class="filters">
              <label v-for="p in periods" :key="p" class="radio"><input v-model="period" type="radio" name="period" :value="p" />{{ p }}</label>
              <label for="view" class="viewlabel"><u>V</u>iew:</label>
              <span class="combo view"><select id="view"><option>All</option></select><i class="drop"><i class="caret"></i></i></span>
              <button class="refresh"><u>R</u>efresh</button>
            </div>
          </fieldset>

          <div class="gridbox">
            <table>
              <colgroup><col class="c1" /><col class="c2" /><col class="c3" /><col class="c4" /><col class="c5" /><col /></colgroup>
              <thead>
                <tr>
                  <th><svg class="ic"><use href="#i-doc" /></svg></th><th><svg class="ic"><use href="#i-clip" /></svg></th>
                  <th>Subject</th><th>Date</th><th>Amount</th><th>Notes</th>
                </tr>
              </thead>
              <tbody>
                <tr v-for="(r, i) in rows" :key="i" :class="{ on: i === selectedRow }" @click="selectedRow = i">
                  <td><svg class="ic"><use :href="'#i-' + r.icon" /></svg></td>
                  <td><svg v-if="r.clip" class="ic clip"><use href="#i-clip" /></svg></td>
                  <td>{{ r.subject }}</td><td>{{ r.date }}</td><td>{{ r.amount }}</td><td>{{ r.notes }}</td>
                </tr>
              </tbody>
            </table>
          </div>
        </main>
      </div>
    </div>

    <footer class="status">
      <span class="s-ready">Ready</span>
      <span class="s-user">User: Darren McGee</span>
      <span class="s-net"><svg class="ic"><use href="#i-globe-ok" /></svg></span>
      <span class="s-db">Database: Master Database</span>
      <span class="s-period">Period: 2007/Oct</span>
      <span class="s-key off">CAP</span>
      <span class="s-key">NUM</span>
      <span class="s-key off">SCRL</span>
      <svg class="size" viewBox="0 0 12 12"><path d="M8 1h3v3H8zM8 5h3v3H8zM4 5h3v3H4zM8 9h3v3H8zM4 9h3v3H4zM0 9h3v3H0z" fill="#b8b4a0" stroke="#fff" stroke-width=".6" /></svg>
    </footer>
  </div>
</template>

<style>
body { margin: 0; }
</style>

<style scoped>
.defs { position: absolute; width: 0; height: 0; }
.window {
  --navy: #27449b;
  --pale: #c5d9f1;
  --beige: #ece9d8;
  box-sizing: border-box;
  min-height: 100vh;
  display: flex;
  flex-direction: column;
  padding: 0 4px 4px;
  background: #3458ac;
  box-shadow: inset 0 -2px #26397c, inset 1px 0 #26458f, inset -1px 0 #26458f;
  color: #000;
  font: 11px/16px Roboto, "Noto Sans", sans-serif;
}
.window *, .window *::before { box-sizing: border-box; }
button, input, select { font: inherit; color: inherit; margin: 0; padding: 0; border: 0; border-radius: 0; background: none; outline: none; }
h1, h2, h3, ul { margin: 0; padding: 0; }
a { color: inherit; text-decoration: none; }
u { text-underline-offset: 2px; }
.ic { width: 16px; height: 16px; flex: none; display: block; }
.caret { display: block; flex: none; width: 7px; height: 4px; background: #000; clip-path: polygon(0 0, 100% 0, 50% 100%); }

.titlebar {
  display: flex; align-items: center; gap: 3px; height: 30px; margin: 0 -4px; padding: 3px 6px 0 6px;
  background: linear-gradient(#28468f 0, #5a86d0 2px, #3a60b2 6px, #365bac 18px, #4068b6 26px, #2f55a6 30px);
  color: #fff;
}
h1 { flex: 1; font: bold 13px/20px "Noto Sans", sans-serif; text-shadow: 1px 1px #1a2f6c; }
.win { width: 20px; height: 20px; border: 1px solid #fff; border-radius: 3px; background: linear-gradient(135deg, #7fa3e2, #3a62b6 50%, #2f55a8); }
.win svg { display: block; width: 18px; height: 18px; }
.win.close { background: linear-gradient(135deg, #f0957c, #e0502c 45%, #cc3c1c); }

.client { flex: 1; display: flex; flex-direction: column; padding: 0 3px; background: linear-gradient(90deg, #a1bbe7 0, #b4caeb 55%, #c2d7f0 100%); }
.menubar { display: flex; align-items: center; height: 27px; padding-left: 4px; }
.grip { width: 2px; height: 15px; margin-right: 5px; background: repeating-linear-gradient(#27449b 0 2px, transparent 2px 4px); flex: none; }
.menu { padding: 0 8px 0 7px; }
.menu:first-of-type { padding-left: 3px; }
.finders { display: flex; align-items: center; gap: 5px; margin-left: auto; padding-right: 1px; }
.sep { width: 2px; height: 16px; flex: none; border-left: 1px solid #6b8cca; border-right: 1px solid #f2f7fe; }
.finder { display: flex; width: 198px; height: 20px; padding: 1px; background: #fff; }
.finder input { flex: 1; min-width: 0; padding-left: 2px; background: transparent; }
.finder input::placeholder { color: #a5a293; opacity: 1; }
.finder button { width: 11px; display: flex; align-items: center; justify-content: center; background: #c5dbf4; border-right: 1px solid #7d9fd6; }
.finder .caret { width: 5px; height: 3px; }

.toolbar { display: flex; align-items: center; align-self: flex-start; height: 25px; gap: 5px; padding: 0 5px 0 3px; margin-left: 1px; border-radius: 0 3px 3px 0; background: linear-gradient(#d9e6f8, #a9c4ea 85%, #7f9fd6); box-shadow: inset 0 -1px #5c7fc2; }
.toolbar .grip { margin-right: -1px; }
.tool { display: flex; align-items: center; gap: 1px; }
.tool .caret { margin-left: 5px; }

.body { flex: 1; display: flex; gap: 4px; margin: 3px -3px 0; padding: 0 3px 4px; background: var(--pale); }
.panel { border: 1px solid var(--navy); display: flex; flex-direction: column; }
.side { flex: none; width: 283px; background: #fff; }
.main { flex: 1; min-width: 0; background: var(--pale); padding: 0 0 3px; }
.main > h2 { display: flex; align-items: center; }
h2 { height: 25px; padding-left: 4px; color: #fff; background: linear-gradient(#5a86cc, #3f66b6 50%, #1c3f94); font: bold 16px/24px "Liberation Sans", Arial, sans-serif; }
.corner { width: 22px; height: 20px; margin: 0 4px 0 auto; }
h3 { height: 18px; padding-left: 6px; font-size: 11px; font-weight: normal; line-height: 18px; background: linear-gradient(#d0e0f5, #a9c3e8); border-bottom: 1px solid var(--navy); }
.tree { flex: 1; list-style: none; padding: 5px 0 0 4px; }
.tree li { display: flex; align-items: center; gap: 5px; height: 16px; }
.tree .tall { height: 18px; padding-bottom: 2px; }
.tree .child { padding-left: 19px; }
.splitter { display: flex; justify-content: center; height: 7px; padding-top: 2px; background: linear-gradient(#5a86cc, #1c3f94); }
.splitter i { width: 37px; height: 3px; background: repeating-linear-gradient(90deg, #fff 0 2px, transparent 2px 4px); }
.nav { display: flex; align-items: center; gap: 4px; height: 32px; padding: 2px 5px 0; border-bottom: 1px solid var(--navy); background: linear-gradient(#cbdef5, #aac6ea 50%, #84a5d9); font: bold 11px/16px "DejaVu Sans Condensed", "Noto Sans", sans-serif; text-align: left; }
.nav svg { width: 24px; height: 24px; flex: none; }
.nav.on { background: linear-gradient(#fadb90, #f6bd5c 50%, #ed9a20); }
.navfoot { display: flex; justify-content: flex-end; height: 32px; padding: 8px 6px; background: linear-gradient(#cbdef5, #aac6ea 50%, #84a5d9); }
.navfoot svg { display: block; width: 10px; height: 14px; }

.tabs { display: flex; align-items: flex-end; flex: none; padding-left: 6px; }
.upper { height: 23px; background: linear-gradient(#c8daf2, #f6f9fe); border-bottom: 1px solid var(--navy); }
.lower { height: 32px; background: linear-gradient(#c5d9f1 40%, #f2f7fd); border-bottom: 2px solid #fff; }
.tab { display: flex; height: 19px; position: relative; }
.face { display: flex; align-items: center; gap: 2px; height: 19px; padding: 1px 3px 0; background: linear-gradient(#dce8f8, #a3bfe6); border: 1px solid #36589f; border-bottom: 0; border-radius: 2px 2px 0 0; }
.slanted .face { border-left: 0; border-radius: 0 2px 0 0; padding-left: 0; padding-right: 5px; }
.slant { width: 20px; height: 19px; margin-right: -1px; flex: none; }
.slant .fill { fill: url(#g-tab); }
.slant .line { fill: none; stroke: #36589f; }
.tab.on { z-index: 1; margin-left: -14px; }
.on .fill { fill: url(#g-tab-on); }
.on .face { background: linear-gradient(#fde6c0, #fac566); }
.first .face { padding-right: 9px; }
.lower .face { padding-right: 3px; }

.record { display: flex; align-items: center; height: 18px; flex: none; padding: 1px 6px 0; border-top: 1px solid #fff; border-bottom: 1px solid var(--navy); background: linear-gradient(#cfdff4, #a6c1e8); }
.entered { margin-left: auto; margin-right: 22px; }
.record button { width: 11px; height: 11px; background: #b0607c; }
.record svg { display: block; }

.form { display: flex; align-items: flex-start; flex: none; padding: 7px 4px 0; height: 159px; }
.left { flex: none; width: 418px; }
.line { display: flex; align-items: center; gap: 3px; }
.line > label:first-child { width: 89px; text-align: right; flex: none; }
.line label, .right label { padding-top: 1px; }
.field { width: 245px; height: 21px; padding: 0 1px; background: #fff; border: 1px solid #fff; border-top: 2px solid #77756a; border-left: 2px solid #77756a; border-right: 2px solid #f1efe2; border-bottom: 2px solid #f1efe2; font: 13px/17px "Liberation Sans", Arial, sans-serif; }
.mid { width: 145px; }
input[type="checkbox"] { appearance: none; width: 13px; height: 13px; background: #fff; border: 2px solid; border-color: #77756a #f1efe2 #f1efe2 #77756a; position: relative; }
input[type="checkbox"]:checked::before { content: ""; position: absolute; left: 3px; top: 0; width: 4px; height: 7px; border: solid #000; border-width: 0 2px 2px 0; transform: rotate(42deg); }
.line .strong { margin-left: 3px; padding-top: 0; font: bold 12px/16px "DejaVu Sans Condensed", "Noto Sans", sans-serif; }
.address { display: flex; margin-top: 3px; }
.box { flex: none; width: 358px; height: 130px; padding-top: 4px; border: 1px solid #f3c878; border-right: 2px solid #f3c060; display: flex; flex-direction: column; gap: 1px; }
.box > .line:nth-child(4) { margin-top: 1px; }
.post { margin-left: 1px; }
.box .post + .field { width: 45px; }
.map { width: 98px; }
.mapline { margin-top: 4px; }
.square { width: 22px; height: 21px; display: flex; align-items: center; justify-content: center; background: var(--beige); border: 1px solid; border-color: #fff #77756a #77756a #fff; box-shadow: inset -1px -1px #b8b4a2; }
.mapline .square { margin-left: 7px; }
.cool { background: #cfdcee; }
.copy { margin-left: -3px; white-space: nowrap; }
.combo { position: relative; display: block; width: 245px; height: 24px; background: #fff; border: 2px solid; border-color: #77756a #f1efe2 #f1efe2 #77756a; }
.combo select { appearance: none; width: 100%; height: 20px; padding: 0 20px 0 1px; font: 13px/18px "Liberation Sans", Arial, sans-serif; }
.drop { position: absolute; right: 0; top: 0; bottom: 0; width: 17px; display: flex; align-items: center; justify-content: center; background: var(--beige); border: 1px solid; border-color: #fff #77756a #77756a #fff; pointer-events: none; }
.sidetabs { display: flex; flex-direction: column; border-left: 1px solid #36589f; height: 130px; padding-top: 6px; }
.sidetabs button { position: relative; width: 22px; height: 34px; }
.sidetabs button > svg:first-child { position: absolute; left: -1px; top: 0; width: 22px; height: 38px; }
.sidetabs .ic { position: relative; margin: 0 0 0 1px; }
.right { display: grid; grid-template-columns: 64px 216px 22px; column-gap: 4px; row-gap: 3px; align-items: center; }
.right label { text-align: right; white-space: nowrap; }
.right > .field, .right > .combo { width: 100%; }
.right > :nth-child(-n+3) { margin-bottom: 4px; }
.right > :nth-child(n+10) { margin-top: 4px; }
.right > :nth-child(n+13) { margin-top: 1px; }

.history { flex: none; height: 44px; margin: 0 5px 1px 4px; padding: 0 4px 0 8px; min-width: 0; border: 1px solid #aca899; box-shadow: none; }
.history legend { margin-left: -2px; padding: 0 3px 0 1px; line-height: 13px; }
.filters { display: flex; align-items: center; height: 24px; }
.radio { display: flex; align-items: center; gap: 5px; width: 68px; padding-top: 2px; }
.radio input { appearance: none; width: 12px; height: 12px; border-radius: 50%; background: #fff; border: 1px solid; border-color: #77756a #f1efe2 #f1efe2 #77756a; }
.radio input:checked { background: radial-gradient(circle, #000 0 2px, #fff 3px); }
.viewlabel { margin: 0 3px 0 133px; }
.view { width: 175px; }
.refresh { width: 90px; height: 22px; margin: 0 0 2px 9px; background: var(--beige); border: 1px solid; border-color: #fff #77756a #77756a #fff; box-shadow: inset -1px -1px #b8b4a2; }

.gridbox { flex: 1; margin: 0 4px; background: #fff; border: 1px solid #000; }
table { width: 100%; table-layout: fixed; border-collapse: separate; border-spacing: 0; }
.c1, .c2 { width: 18px; }
.c3 { width: 327px; }
.c4 { width: 196px; }
.c5 { width: 98px; }
th { height: 21px; padding: 2px 0 0 2px; position: relative; text-align: left; font-weight: normal; background: linear-gradient(#dfe9f9, #b7cdef 50%, #7fa2da); border-bottom: 1px solid #3a5ea6; }
th + th::before { content: ""; position: absolute; left: -1px; top: 2px; bottom: 2px; width: 2px; background: linear-gradient(90deg, #6c90cf 50%, #fff 50%); }
th .ic { margin-left: -2px; }
td { height: 19px; padding: 2px 0 0 1px; border-bottom: 1px solid #ebe6df; white-space: nowrap; line-height: 16px; }
td .ic { height: 16px; }
.clip { color: #5c7088; }
tr.on td { background: var(--beige); }

.status { display: flex; gap: 2px; height: 20px; flex: none; padding-top: 2px; background: var(--beige); }
.status span { height: 18px; padding-left: 1px; line-height: 17px; border: 1px solid #d2cebd; white-space: nowrap; flex: none; }
.status .s-ready { flex: 0 0 308px; padding-left: 0; border-color: transparent; }
.s-user { width: 257px; }
.s-net { width: 127px; display: flex; justify-content: center; }
.status .s-db { flex: 1; }
.s-period { width: 210px; }
.s-key { min-width: 31px; }
.off { color: #aca899; }
.size { width: 12px; height: 12px; flex: none; align-self: flex-end; margin: 0 1px 2px 9px; }
</style>
